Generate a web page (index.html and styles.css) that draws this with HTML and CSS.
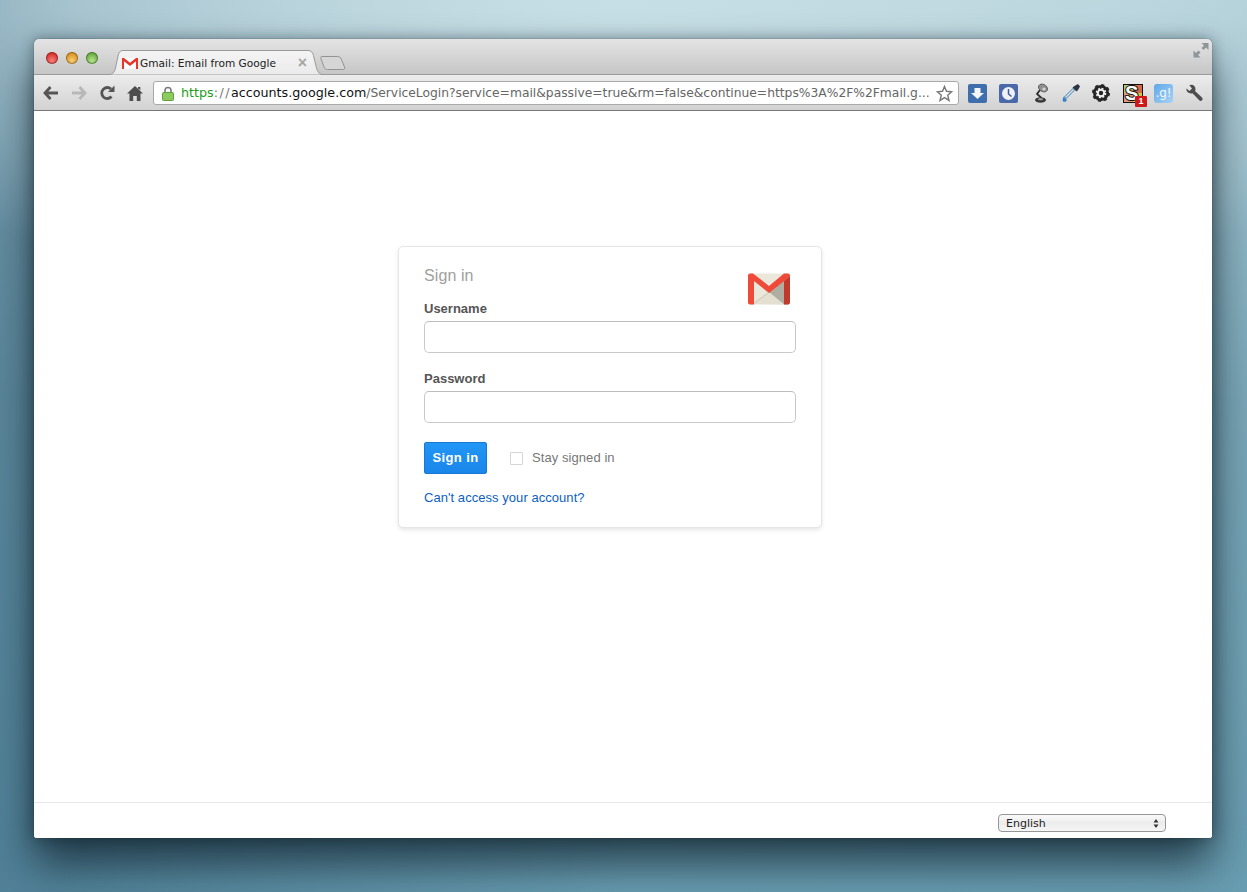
FILE: index.html
```html
<!DOCTYPE html>
<html lang="en">
<head>
<meta charset="utf-8">
<title>Gmail: Email from Google</title>
<link rel="stylesheet" href="styles.css">
</head>
<body>
<div class="window">
  <div class="titlebar">
    <div class="lights">
      <span class="light red"></span><span class="light amber"></span><span class="light green"></span>
    </div>
    <div class="tab">
      <svg class="tab-shape" width="212" height="25" viewBox="0 0 212 25"><defs><linearGradient id="tabfill" x1="0" y1="0" x2="0" y2="1"><stop offset="0" stop-color="#f4f4f4"/><stop offset="1" stop-color="#ebebeb"/></linearGradient></defs><path d="M0 24.500C3 24 4.500 22 5.500 18L8 6C8.800 2.500 10 .5 13 .5L198 .5C201 .5 202.500 2 203.500 5.500L205.500 14C207 21 208.500 24 212 24.500" fill="url(#tabfill)" stroke="#9a9a9a"/></svg>
      <svg class="favicon" width="16" height="11" viewBox="0 0 16 11"><rect width="16" height="11" fill="#fff"/><path d="M0 0H2L8 4.800 14 0H16V11H14V3.300L8 8 2 3.300V11H0Z" fill="#e8352a"/></svg>
      <span class="tab-title">Gmail: Email from Google</span>
      <span class="tab-close">×</span>
    </div>
    <svg class="newtab" width="26" height="16" viewBox="0 0 28 17"><path d="M2 1.500H19C21 1.500 22 2.500 23 4.500L26.500 13C27 15 26 15.500 24.500 15.500H8C6 15.500 5.500 15 4.500 13L1 4C.5 2.500 1 1.500 2 1.500Z" fill="#d6d6d6" stroke="#8e8e8e"/></svg>
    <svg class="fullscreen" width="16" height="16" viewBox="0 0 16 16" fill="#8f9699"><path d="M8.500 1H15.500V8L13 5.500 10.500 8 8.500 6 11 3.500Z"/><path d="M.5 8.500 3 11 5.500 8.500 7.500 10.500 5 13 7.500 15.500H.5Z"/></svg>
  </div>
  <div class="toolbar">
    <div class="nav">
      <svg width="16" height="14" viewBox="0 0 16 14"><path d="M7.500 1 2 7 7.500 13M2.500 7H15" fill="none" stroke="#555" stroke-width="2.800"/></svg>
      <svg width="16" height="14" viewBox="0 0 16 14"><path d="M8.500 1 14 7 8.500 13M13.500 7H1" fill="none" stroke="#b8b8b8" stroke-width="2.800"/></svg>
      <svg width="16" height="16" viewBox="0 0 16 16"><path d="M12.500 11.500A5.500 5.500 0 1 1 12 4" fill="none" stroke="#555" stroke-width="2.800"/><path d="M9 7H15.500V.5Z" fill="#555"/></svg>
      <svg width="16" height="15" viewBox="0 0 16 15"><path d="M8 0 16 7.500H13.500V15H9.800V10H6.200V15H2.500V7.500H0L8 0ZM11 1H13.300V4L11 2.500Z" fill="#4d4d4d"/></svg>
    </div>
    <div class="omnibox">
      <svg class="lock" width="12" height="15" viewBox="0 0 12 15"><path d="M3 7V4.500A3 3 0 0 1 9 4.500V7" fill="none" stroke="#7b7b7b" stroke-width="1.600"/><rect x=".5" y="6.500" width="11" height="8" rx="1" fill="#8ecb5e" stroke="#5f9e3c"/></svg>
      <span class="url"><span class="scheme">https</span><span class="slashes">://</span><span class="host">accounts.google.com</span><span class="path">/ServiceLogin?service=mail&amp;passive=true&amp;rm=false&amp;continue=https%3A%2F%2Fmail.g...</span></span>
      <svg class="star" width="17" height="17" viewBox="0 0 17 17"><path d="M8.500 1.500 10.500 6.300 15.700 6.800 11.700 10.200 13 15.400 8.500 12.600 4 15.400 5.300 10.200 1.300 6.800 6.500 6.300Z" fill="#fff" stroke="#777" stroke-width="1.400"/></svg>
    </div>
    <div class="extensions">
      <svg class="ext ext-download" width="19" height="19" viewBox="0 0 19 19"><rect width="19" height="19" rx="2" fill="#3f6ead"/><path d="M6.500 4H12.500V9H16L9.500 15 3 9H6.500Z" fill="#f4f6fa"/></svg>
      <svg class="ext ext-clock" width="19" height="19" viewBox="0 0 19 19"><rect width="19" height="19" rx="2" fill="#4a69a8"/><circle cx="9.500" cy="9.500" r="6.500" fill="#eef1f7"/><path d="M9.500 5V10L12.500 12.500" fill="none" stroke="#3d5b98" stroke-width="1.500"/></svg>
      <svg class="ext ext-lamp" width="14" height="20" viewBox="0 0 14 20"><path d="M6 7 3 11 7.500 15" fill="none" stroke="#2f2f2f" stroke-width="1.800"/><ellipse cx="9" cy="5" rx="4.800" ry="3.600" transform="rotate(30 9 5)" fill="#8f8f8f" stroke="#555" stroke-width=".8"/><circle cx="10" cy="6" r="1.600" fill="#d6d6d6"/><ellipse cx="6.500" cy="17" rx="5.500" ry="2.800" fill="#3a3a3a"/><ellipse cx="6.500" cy="16.300" rx="2.500" ry="1" fill="#a8a8a8"/></svg>
      <svg class="ext ext-dropper" width="19" height="20" viewBox="0 0 19 20"><path d="M3 15 12 6" stroke="#3e7fbc" stroke-width="3" fill="none"/><path d="M3.500 14.500 11.500 6.500" stroke="#e8e8e8" stroke-width="1.400" fill="none"/><path d="M10.500 4.500 14.500 8.500 16 7 18 3.500 16 1 12.500 3Z" fill="#2d3540"/><path d="M1.500 13.500 5 17 3.800 18.800H1.300L.5 17Z" fill="#3b82c4"/></svg>
      <svg class="ext ext-gear" width="18" height="18" viewBox="0 0 18 18"><circle cx="9" cy="9" r="8" fill="#262626"/><circle cx="9" cy="9" r="8" fill="none" stroke="#262626" stroke-width="2" stroke-dasharray="3 3.280"/><circle cx="9" cy="9" r="4.600" fill="none" stroke="#f0f0f0" stroke-width="1.400" stroke-dasharray="2 1.610"/><circle cx="9" cy="9" r="3.200" fill="none" stroke="#f0f0f0" stroke-width="2"/></svg>
      <div class="ext ext-s">
        <span class="tile t1"></span><span class="tile t2"></span><span class="tile t3"></span><span class="tile t4"></span>
        <span class="s-letter">S</span><span class="badge">1</span>
      </div>
      <div class="ext ext-g">.g!</div>
      <svg class="ext ext-wrench" width="18" height="18" viewBox="0 0 18 18"><path d="M1.500 4.500 4.500 7 7 4.500 4.300 1.300C7 -.2 10.500 1.500 10.500 5 10.500 5.700 10.400 6.300 10 7L17 13.500C17.800 14.300 17.800 15.500 17 16.300 16.200 17.100 15 17.100 14.200 16.300L7.500 9.300C4.500 10.200 .8 8 1.500 4.500Z" fill="#4d4d4d"/></svg>
    </div>
  </div>
  <main class="content">
    <div class="main-area">
      <form class="card">
        <svg class="logo" width="42" height="32" viewBox="0 0 42 32">
          <rect width="42" height="31" y=".5" rx="2" fill="#ebe7da"/>
          <path d="M21 19.500 42 3V29C42 30.500 41 31.500 40 31.500H36Z" fill="#b0ada1"/>
          <path d="M5 31 21 19 24 21.500 36 31.500Z" fill="#e3dfd1"/>
          <path d="M5 31 21 19" stroke="#c4c0b2" stroke-width=".8"/>
          <path d="M36 8V31.500H40C41 31.500 42 30.500 42 29V3Z" fill="#c0392b"/>
          <path d="M0 2.500C0 1.500 1 .5 2 .5H5L21 13 36 .5H40C41 .5 42 1.500 42 2.500V3.500L21 20 6 8V31.500H2C1 31.500 0 30.500 0 29.500Z" fill="#ef4a39"/>
        </svg>
        <h1 class="card-title">Sign in</h1>
        <label class="field-label" for="username">Username</label>
        <input class="text-input" id="username" type="text">
        <label class="field-label password-label" for="password">Password</label>
        <input class="text-input" id="password" type="password">
        <div class="actions">
          <button class="submit" type="button">Sign in</button>
          <label class="stay"><input class="check" type="checkbox"><span>Stay signed in</span></label>
        </div>
        <a class="help" href="#">Can't access your account?</a>
      </form>
    </div>
    <footer class="footer">
      <div class="lang">
        <select class="lang-select"><option>English</option></select>
        <svg class="lang-arrows" width="6" height="9" viewBox="0 0 6 9" fill="#333"><path d="M3 0 5.500 3.500H.5ZM3 9 .5 5.500H5.500Z"/></svg>
      </div>
    </footer>
  </main>
</div>
</body>
</html>
```

FILE: styles.css
```css
* { box-sizing: border-box; }
html, body { height: 100%; }
body {
  margin: 0;
  height: 892px;
  overflow: hidden;
  padding: 39px 35px 0 34px;
  font-family: "Liberation Sans", Arial, sans-serif;
  background:
    radial-gradient(ellipse 900px 320px at 50% 0, #c6dee5 0%, rgba(198,222,229,.6) 60%, rgba(198,222,229,0) 100%),
    linear-gradient(90deg, rgba(60,105,130,.55) 0%, rgba(60,105,130,0) 50%, rgba(100,150,170,.15) 100%),
    linear-gradient(180deg, #b4d0d9 0%, #7fabbb 45%, #6a9fb3 100%);
}
.window {
  height: 799px;
  border-radius: 5px 5px 3px 3px;
  overflow: hidden;
  display: flex;
  flex-direction: column;
  box-shadow: 0 26px 44px rgba(10, 25, 35, .72), 0 0 14px rgba(10, 25, 35, .4), 0 0 1px rgba(0,0,0,.7);
}
.titlebar {
  position: relative;
  height: 36px;
  flex: none;
  display: flex;
  align-items: flex-end;
  background: linear-gradient(180deg, #e4e4e4 0%, #c6c6c6 100%);
  border-bottom: 1px solid #9b9b9b;
}
.lights {
  display: flex;
  gap: 8px;
  align-self: flex-start;
  margin: 13px 0 0 12px;
}
.light {
  width: 12px;
  height: 12px;
  border-radius: 50%;
  box-shadow: inset 0 0 0 1px rgba(0,0,0,.3);
}
.red { background: radial-gradient(circle at 50% 70%, #f77f7a, #d62f2b 70%); }
.amber { background: radial-gradient(circle at 50% 70%, #f9cf70, #d88f20 70%); }
.green { background: radial-gradient(circle at 50% 70%, #b6e48a, #66a83f 70%); }
.tab {
  position: relative;
  width: 212px;
  height: 25px;
  margin: 0 0 -1px 12px;
  display: flex;
  align-items: center;
  padding: 1px 15px 0 12px;
}
.tab-shape { position: absolute; left: 0; top: 0; }
.favicon { position: relative; flex: none; margin-right: 2px; }
.tab-title {
  position: relative;
  flex: 1;
  font: 10.6px/14px "DejaVu Sans", sans-serif;
  color: #222;
  white-space: nowrap;
}
.tab-close {
  position: relative;
  font: bold 16px/14px "Liberation Sans", sans-serif;
  color: #a6a6a6;
}
.newtab { margin: 0 0 3px -2px; flex: none; }
.fullscreen { position: absolute; right: 3px; top: 3px; }
.toolbar {
  height: 36px;
  flex: none;
  display: flex;
  align-items: center;
  padding: 1px 8px 0 9px;
  background: linear-gradient(180deg, #ececec 0%, #d2d2d2 100%);
  border-bottom: 1px solid #777;
}
.nav {
  display: flex;
  align-items: center;
  gap: 12px;
  width: 110px;
  flex: none;
}
.omnibox {
  width: 806px;
  height: 24px;
  flex: none;
  display: flex;
  align-items: center;
  padding: 0 5px 0 8px;
  background: #fff;
  border: 1px solid #a9a9a9;
  border-radius: 3px;
}
.lock { flex: none; }
.url {
  flex: 1;
  margin-left: 7px;
  font: 12.7px/16px "DejaVu Sans", sans-serif;
  white-space: nowrap;
  overflow: hidden;
  color: #555;
}
.scheme { color: #1aa01a; }
.slashes { color: #777; letter-spacing: 1.500px; }
.host { color: #111; }
.path { color: #666; font-size: 12.3px; }
.star { flex: none; }
.extensions {
  display: flex;
  align-items: center;
  flex: none;
  margin-left: 9px;
}
.ext { flex: none; }
.ext-clock { margin-left: 12px; }
.ext-lamp { margin-left: 16px; }
.ext-dropper { margin-left: 14px; }
.ext-gear { margin-left: 11px; }
.ext-s {
  position: relative;
  width: 20px;
  height: 19px;
  margin-left: 13px;
  display: grid;
  grid-template-columns: 1fr 1fr;
  grid-template-rows: 1fr 1fr;
  border: 1px solid #111;
}
.tile { display: block; }
.t1 { background: #b5c96a; }
.t2 { background: #d9694a; }
.t3 { background: #dc9a7a; }
.t4 { background: #d9c23c; }
.s-letter {
  position: absolute;
  left: 1px;
  top: -2px;
  font: bold 20px/21px "Liberation Sans", sans-serif;
  color: #fff;
  -webkit-text-stroke: 2px #111;
  paint-order: stroke fill;
}
.badge {
  position: absolute;
  right: -5px;
  bottom: -5px;
  width: 12px;
  height: 11px;
  border-radius: 1px;
  background: #d01818;
  color: #fff;
  font: bold 9px/11px "Liberation Sans", sans-serif;
  text-align: center;
}
.ext-g {
  width: 19px;
  height: 19px;
  margin-left: 11px;
  border-radius: 3px;
  background: linear-gradient(135deg, #5fa8e8, #a8d2f4);
  color: #f2f9fe;
  font: 12px/18px "DejaVu Sans", sans-serif;
  text-align: center;
}
.ext-wrench { margin-left: 12px; }
.content {
  flex: 1;
  display: flex;
  flex-direction: column;
  background: #fff;
  min-height: 0;
}
.main-area {
  flex: 1;
  padding: 135px 0 0 364px;
}
.card {
  position: relative;
  width: 424px;
  height: 282px;
  padding: 19px 25px 0;
  background: #fff;
  border: 1px solid #e5e5e5;
  border-radius: 5px;
  box-shadow: 0 2px 4px rgba(0,0,0,.1);
}
.logo { position: absolute; right: 31px; top: 26px; }
.card-title {
  margin: 0 0 15px;
  font-size: 16px;
  line-height: 20px;
  font-weight: 400;
  letter-spacing: .1px;
  color: #a0a0a0;
}
.field-label {
  display: block;
  font-size: 13px;
  line-height: 16px;
  font-weight: 700;
  color: #555;
  margin-bottom: 4px;
}
.password-label { margin-top: 18px; }
.text-input {
  display: block;
  width: 372px;
  height: 32px;
  padding: 0 8px;
  background: #fff;
  border: 1px solid #c9c9c9;
  border-top-color: #bdbdbd;
  border-radius: 5px;
  outline: none;
}
.actions {
  display: flex;
  align-items: center;
  margin-top: 19px;
}
.submit {
  width: 63px;
  height: 32px;
  padding: 0;
  background: linear-gradient(180deg, #2196f5, #1a86ea);
  border: 1px solid #1a78d4;
  border-radius: 2px;
  color: #fff;
  font: 700 13px/16px "Liberation Sans", sans-serif;
  letter-spacing: .4px;
}
.stay {
  display: flex;
  align-items: center;
  margin-left: 23px;
  font-size: 13px;
  line-height: 16px;
  letter-spacing: .07px;
  color: #777;
}
.check {
  appearance: none;
  -webkit-appearance: none;
  width: 13px;
  height: 13px;
  margin: 0 9px 0 0;
  background: #fff;
  border: 1px solid #d5d5d5;
  border-radius: 1px;
}
.help {
  display: block;
  margin-top: 16px;
  font-size: 13px;
  line-height: 16px;
  letter-spacing: .05px;
  color: #0b5fc4;
  text-decoration: none;
}
.footer {
  height: 36px;
  flex: none;
  display: flex;
  justify-content: flex-end;
  align-items: flex-start;
  padding: 11px 46px 0 0;
  background: #fff;
  border-top: 1px solid #e8e8e8;
}
.lang { position: relative; width: 168px; height: 18px; }
.lang-select {
  appearance: none;
  -webkit-appearance: none;
  display: block;
  width: 168px;
  height: 18px;
  padding: 1px 0 0 7px;
  background: linear-gradient(180deg, #fafafa 0%, #ececec 50%, #f6f6f6 100%);
  border: 1px solid #969696;
  border-radius: 4px;
  color: #222;
  font: 11px/16px "DejaVu Sans", sans-serif;
}
.lang-arrows { position: absolute; right: 7px; top: 5px; pointer-events: none; }
```
